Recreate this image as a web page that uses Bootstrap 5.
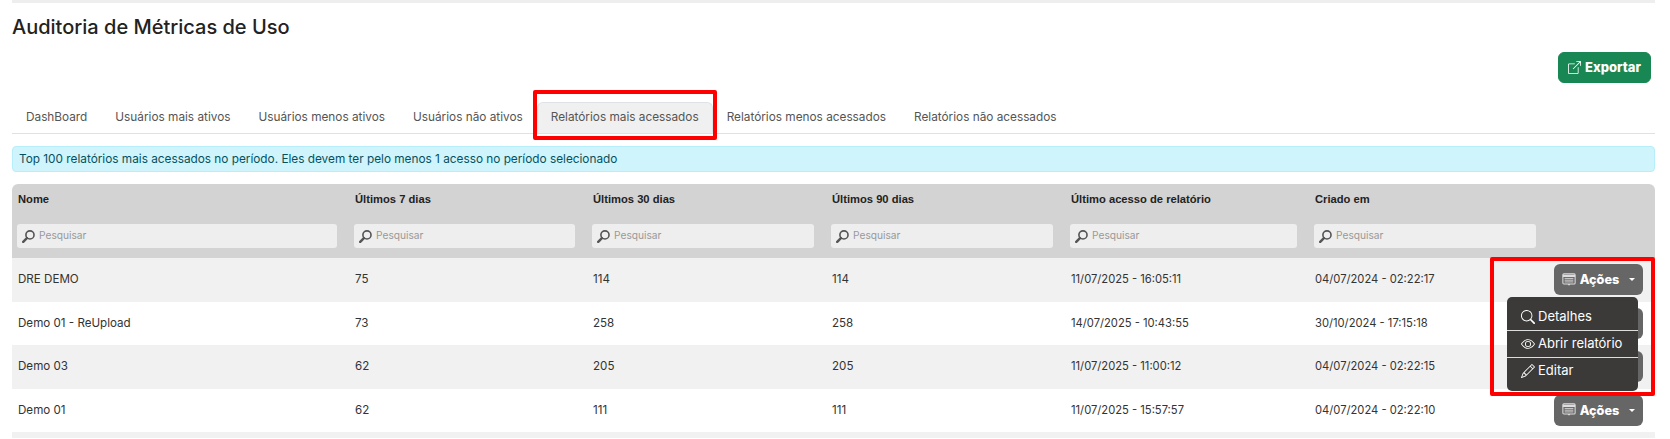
<!DOCTYPE html>
<html lang="pt-BR">
<head>
    <meta charset="UTF-8" />
    <meta name="viewport" content="width=device-width, initial-scale=1.0" />
    <title>Auditoria de Métricas de Uso</title>
    <link href="https://cdn.jsdelivr.net/npm/bootstrap@5.3.0/dist/css/bootstrap.min.css" rel="stylesheet">
    <style>
        html, body {
            height: 439px;
            overflow: hidden;
        }
        body {
            font-family: "Inter", "Noto Sans", sans-serif;
            font-size: 11.6px;
            color: #333;
            background: #fff;
        }
        .page-wrap {
            position: relative;
            padding: 0 15px 0 12px;
        }
        .top-strip {
            height: 3px;
            background: #eee;
        }
        .page-title {
            font-size: 20px;
            font-weight: 500;
            color: #222;
            margin: 12px 0 0;
            line-height: 24px;
        }
        .export-row {
            margin-top: 13px;
            padding-right: 4px;
        }
        .btn-export {
            height: 31px;
            width: 93px;
            padding: 0;
            font-size: 13px;
            font-weight: 800;
            background: #198754;
            border-radius: 6px;
        }
        .tabs-bar {
            margin-top: 19px;
            border-bottom: 1px solid #dee2e6;
            height: 32px;
        }
        .tabs-bar .nav-link {
            height: 31px;
            padding: 0 13px;
            line-height: 29px;
            font-size: 11.8px;
            color: #555;
            border: 1px solid transparent;
            border-radius: 6px 6px 0 0;
        }
        .tabs-bar .nav-link.active {
            background: #f0f0f0;
            color: #555;
            border-color: #dee2e6 #dee2e6 #f0f0f0;
        }
        .tab-holder {
            position: relative;
        }
        .red-box {
            position: absolute;
            border: 4px solid #f00;
            border-radius: 2px;
            pointer-events: none;
            z-index: 5;
        }
        .red-tab {
            left: -4px;
            right: -4px;
            top: -12px;
            bottom: -7px;
        }
        .red-actions {
            left: 1490px;
            top: 257px;
            width: 165px;
            height: 139px;
        }
        .info-line {
            margin: 12px 0;
            padding: 0 6px;
            height: 26px;
            line-height: 24px;
            font-size: 11.8px;
            background: #cff4fc;
            border: 1px solid #b6effb;
            border-radius: 4px;
            color: #055160;
        }
        .audit-table {
            width: 100%;
            table-layout: fixed;
            margin: 0;
            border-collapse: separate;
            border-spacing: 0;
        }
        .audit-table col:nth-child(1) { width: 337px; }
        .audit-table col:nth-child(2) { width: 238px; }
        .audit-table col:nth-child(3) { width: 239px; }
        .audit-table col:nth-child(4) { width: 239px; }
        .audit-table col:nth-child(5) { width: 244px; }
        .audit-table col:nth-child(6) { width: 239px; }
        .audit-table th {
            background: #d3d3d3;
            font-family: "Liberation Sans", Arial, sans-serif;
            font-size: 11.2px;
            font-weight: 700;
            color: #222;
            padding: 0 6px;
            border: 0;
            vertical-align: middle;
        }
        .audit-table tr.head-top th {
            height: 40px;
            padding-bottom: 10px;
        }
        .audit-table tr.head-top th:first-child {
            border-top-left-radius: 6px;
        }
        .audit-table tr.head-top th:last-child {
            border-top-right-radius: 6px;
        }
        .audit-table tr.head-search th {
            height: 34px;
            padding: 0 12px 0 5px;
            vertical-align: top;
        }
        .audit-table td {
            height: 43.5px;
            padding: 0 6px;
            vertical-align: middle;
            font-size: 11.6px;
            color: #333;
            border: 0;
            background: #fff;
        }
        .audit-table tbody tr:nth-child(odd) td {
            background: #f1f1f1;
        }
        .audit-table tbody tr:last-child td {
            height: 6px;
        }
        .audit-table td.date-cell {
            font-size: 11.2px;
        }
        .search-box {
            height: 24px;
            background: #eee;
            border-radius: 3px;
            padding: 0 5px;
            gap: 4px;
            font-family: "Inter", "Noto Sans", sans-serif;
            font-size: 10.2px;
            font-weight: 400;
            color: #999;
        }
        .btn-acoes {
            height: 31px;
            width: 89px;
            padding: 0;
            background: #666;
            border: 0;
            border-radius: 6px;
            color: #fff;
            font-size: 12.7px;
            font-weight: 800;
            margin-right: 8px;
        }
        .btn-acoes::after {
            margin-left: 6px;
            vertical-align: 2px;
            border-top-width: 3.5px;
            border-right-width: 3.5px;
            border-left-width: 3.5px;
        }
        .acoes-menu {
            position: absolute;
            left: 1507px;
            top: 297px;
            width: 131px;
            height: 94px;
            background: #3b3a39;
            border-radius: 5px;
            padding: 7px 0 0;
            z-index: 3;
        }
        .acoes-menu a {
            height: 27px;
            padding: 0 4px 0 14px;
            gap: 3px;
            color: #fff;
            font-size: 13px;
            white-space: nowrap;
            text-decoration: none;
            border-bottom: 1px solid #ddd;
        }
        .acoes-menu a:last-child {
            height: 25px;
            border-bottom: 0;
        }
    </style>
</head>
<body>

    <div class="page-wrap">
        <div class="top-strip"></div>
        <h1 class="page-title">Auditoria de Métricas de Uso</h1>

        <div class="export-row d-flex justify-content-end">
            <button type="button" class="btn btn-success btn-export d-flex align-items-center justify-content-center gap-1">
                <svg width="13" height="13" viewBox="0 0 16 16" fill="currentColor"><path fill-rule="evenodd" d="M8.636 3.5a.5.5 0 0 0-.5-.5H1.5A1.5 1.5 0 0 0 0 4.5v10A1.5 1.5 0 0 0 1.5 16h10a1.5 1.5 0 0 0 1.5-1.5V7.864a.5.5 0 0 0-1 0V14.5a.5.5 0 0 1-.5.5h-10a.5.5 0 0 1-.5-.5v-10a.5.5 0 0 1 .5-.5h6.636a.5.5 0 0 0 .5-.5z"/><path fill-rule="evenodd" d="M16 .5a.5.5 0 0 0-.5-.5h-5a.5.5 0 0 0 0 1h3.793L6.146 9.146a.5.5 0 1 0 .708.708L15 1.707V5.5a.5.5 0 0 0 1 0v-5z"/></svg>
                Exportar
            </button>
        </div>

        <ul class="nav tabs-bar">
            <li class="nav-item"><a class="nav-link" href="#">DashBoard</a></li>
            <li class="nav-item"><a class="nav-link" href="#">Usuários mais ativos</a></li>
            <li class="nav-item"><a class="nav-link" href="#">Usuários menos ativos</a></li>
            <li class="nav-item"><a class="nav-link" href="#">Usuários não ativos</a></li>
            <li class="nav-item tab-holder">
                <a class="nav-link active" href="#">Relatórios mais acessados</a>
                <div class="red-box red-tab"></div>
            </li>
            <li class="nav-item"><a class="nav-link" href="#">Relatórios menos acessados</a></li>
            <li class="nav-item"><a class="nav-link" href="#">Relatórios não acessados</a></li>
        </ul>

        <div class="info-line">Top 100 relatórios mais acessados no período. Eles devem ter pelo menos 1 acesso no período selecionado</div>

        <table class="table audit-table">
            <colgroup>
                <col><col><col><col><col><col><col>
            </colgroup>
            <thead>
                <tr class="head-top">
                    <th>Nome</th>
                    <th>Últimos 7 dias</th>
                    <th>Últimos 30 dias</th>
                    <th>Últimos 90 dias</th>
                    <th>Último acesso de relatório</th>
                    <th>Criado em</th>
                    <th></th>
                </tr>
                <tr class="head-search">
                    <th><div class="search-box d-flex align-items-center"><svg width="13" height="13" viewBox="0 0 16 16"><use href="#lupa"/></svg>Pesquisar</div></th>
                    <th><div class="search-box d-flex align-items-center"><svg width="13" height="13" viewBox="0 0 16 16"><use href="#lupa"/></svg>Pesquisar</div></th>
                    <th><div class="search-box d-flex align-items-center"><svg width="13" height="13" viewBox="0 0 16 16"><use href="#lupa"/></svg>Pesquisar</div></th>
                    <th><div class="search-box d-flex align-items-center"><svg width="13" height="13" viewBox="0 0 16 16"><use href="#lupa"/></svg>Pesquisar</div></th>
                    <th><div class="search-box d-flex align-items-center"><svg width="13" height="13" viewBox="0 0 16 16"><use href="#lupa"/></svg>Pesquisar</div></th>
                    <th><div class="search-box d-flex align-items-center"><svg width="13" height="13" viewBox="0 0 16 16"><use href="#lupa"/></svg>Pesquisar</div></th>
                    <th></th>
                </tr>
            </thead>
            <tbody id="linhas"></tbody>
        </table>

        <div class="acoes-menu">
            <a href="#" class="d-flex align-items-center">
                <svg width="14" height="14" viewBox="0 0 16 16" fill="currentColor"><path d="M11.742 10.344a6.5 6.5 0 1 0-1.397 1.398h-.001c.03.04.062.078.098.115l3.85 3.85a1 1 0 0 0 1.415-1.414l-3.85-3.85a1.007 1.007 0 0 0-.115-.1zM12 6.5a5.5 5.5 0 1 1-11 0 5.5 5.5 0 0 1 11 0z"/></svg>
                Detalhes
            </a>
            <a href="#" class="d-flex align-items-center">
                <svg width="14" height="14" viewBox="0 0 16 16" fill="currentColor"><path d="M16 8s-3-5.5-8-5.5S0 8 0 8s3 5.5 8 5.5S16 8 16 8zM1.173 8a13.133 13.133 0 0 1 1.66-2.043C4.12 4.668 5.88 3.5 8 3.5c2.12 0 3.879 1.168 5.168 2.457A13.133 13.133 0 0 1 14.828 8c-.058.087-.122.183-.195.288-.335.48-.83 1.12-1.465 1.755C11.879 11.332 10.119 12.5 8 12.5c-2.12 0-3.879-1.168-5.168-2.457A13.134 13.134 0 0 1 1.172 8z"/><path d="M8 5.5a2.5 2.5 0 1 0 0 5 2.5 2.5 0 0 0 0-5zM4.5 8a3.5 3.5 0 1 1 7 0 3.5 3.5 0 0 1-7 0z"/></svg>
                Abrir relatório
            </a>
            <a href="#" class="d-flex align-items-center">
                <svg width="14" height="14" viewBox="0 0 16 16" fill="currentColor"><path d="M12.146.146a.5.5 0 0 1 .708 0l3 3a.5.5 0 0 1 0 .708l-10 10a.5.5 0 0 1-.168.11l-5 2a.5.5 0 0 1-.65-.65l2-5a.5.5 0 0 1 .11-.168l10-10zM11.207 2.5 13.5 4.793 14.793 3.5 12.5 1.207 11.207 2.5zm1.586 3L10.5 3.207 4 9.707V10h.5a.5.5 0 0 1 .5.5v.5h.5a.5.5 0 0 1 .5.5v.5h.293l6.5-6.5zm-9.761 5.175-.106.106-1.528 3.821 3.821-1.528.106-.106A.5.5 0 0 1 5 12.5V12h-.5a.5.5 0 0 1-.5-.5V11h-.5a.5.5 0 0 1-.468-.325z"/></svg>
                Editar
            </a>
        </div>

        <div class="red-box red-actions"></div>
    </div>

    <svg width="0" height="0" class="position-absolute">
        <defs>
            <g id="lupa">
                <circle cx="9.8" cy="6" r="5" fill="none" stroke="#555" stroke-width="2"/>
                <path d="M6 10 1.5 14.5" stroke="#555" stroke-width="3" stroke-linecap="round"/>
            </g>
            <g id="relatorio" fill="none" stroke="#ddd">
                <rect x="1" y="1" width="14" height="11.5" rx="1.2" stroke-width="1.2"/>
                <path d="M1 3.4h14" stroke-width="2.4"/>
                <path d="M3 6.2h10M3 8.2h10M3 10.2h10" stroke-width="1"/>
                <path d="M6.5 12.6 8 14.6l1.5-2z" fill="#ddd" stroke="none"/>
            </g>
        </defs>
    </svg>

    <script>
        const relatorios = [
            ['DRE DEMO', '75', '114', '114', '11/07/2025 - 16:05:11', '04/07/2024 - 02:22:17'],
            ['Demo 01 - ReUpload', '73', '258', '258', '14/07/2025 - 10:43:55', '30/10/2024 - 17:15:18'],
            ['Demo 03', '62', '205', '205', '11/07/2025 - 11:00:12', '04/07/2024 - 02:22:15'],
            ['Demo 01', '62', '111', '111', '11/07/2025 - 15:57:57', '04/07/2024 - 02:22:10'],
            ['', '', '', '', '', '']
        ];
        const acoes = '<button type="button" class="btn btn-acoes dropdown-toggle d-inline-flex align-items-center justify-content-center gap-1">'
            + '<svg width="14" height="14" viewBox="0 0 16 16"><use href="#relatorio"/></svg>Ações</button>';

        document.getElementById('linhas').innerHTML = relatorios.map(r =>
            '<tr>' + r.map((c, i) => '<td' + (i > 3 ? ' class="date-cell"' : '') + '>' + c + '</td>').join('')
            + '<td class="text-end">' + (r[0] ? acoes : '') + '</td></tr>'
        ).join('');
    </script>
    <script src="https://cdn.jsdelivr.net/npm/bootstrap@5.3.0/dist/js/bootstrap.bundle.min.js"></script>
</body>
</html>
